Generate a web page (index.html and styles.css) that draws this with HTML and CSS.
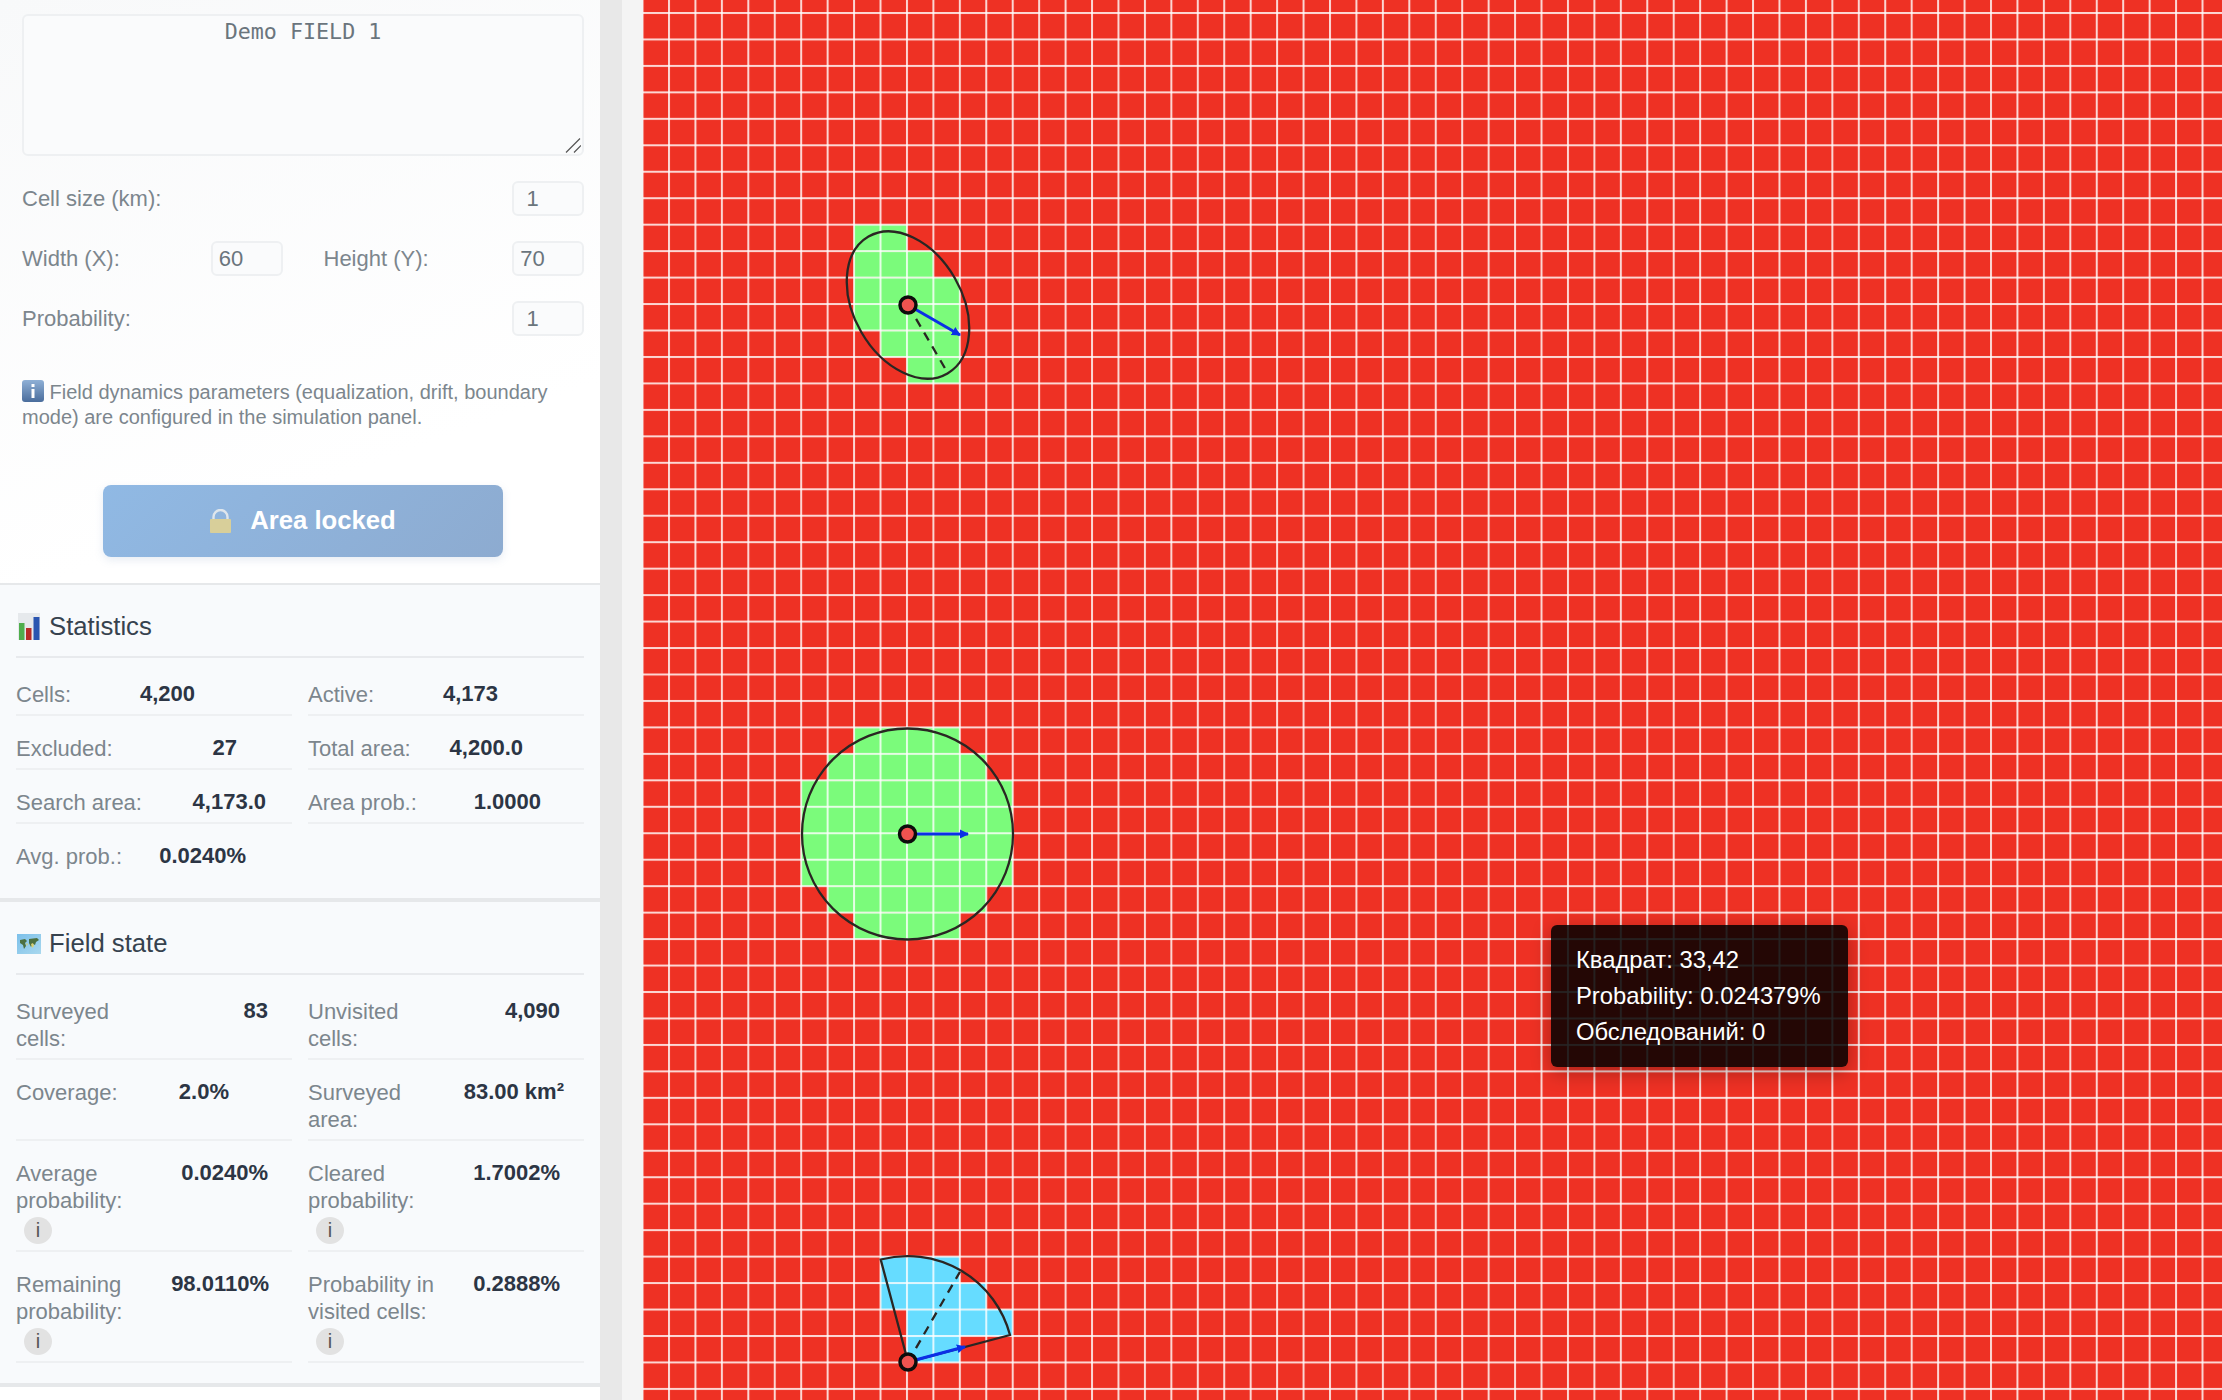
FILE: index.html
```html
<!DOCTYPE html>
<html lang="en">
<head>
    <meta charset="UTF-8">
    <meta name="viewport" content="width=device-width, initial-scale=1.0">
    <title>Search field</title>
    <link rel="stylesheet" href="styles.css">
</head>
<body>
    <aside class="sidebar">
        <section class="setup">
            <div class="name-wrap">
                <textarea class="field-name" readonly>Demo FIELD 1</textarea>
                <svg class="grip" viewBox="0 0 16 15">
                    <path d="M1 14.5L15 0.5M9 14.5L16 7.5" fill="none" stroke="#555" stroke-width="1.2"/>
                </svg>
            </div>

            <div class="form-row">
                <div class="form-item">
                    <label>Cell size (km):</label>
                    <input class="num" type="text" value="1" readonly>
                </div>
            </div>
            <div class="form-row">
                <div class="form-item">
                    <label>Width (X):</label>
                    <input class="num" type="text" value="60" readonly>
                </div>
                <div class="form-item">
                    <label>Height (Y):</label>
                    <input class="num" type="text" value="70" readonly>
                </div>
            </div>
            <div class="form-row">
                <div class="form-item">
                    <label>Probability:</label>
                    <input class="num" type="text" value="1" readonly>
                </div>
            </div>

            <p class="note">
                <svg class="note-icon" viewBox="0 0 22 22">
                    <defs>
                        <linearGradient id="infoBlue" x1="0" y1="0" x2="0" y2="1">
                            <stop offset="0" stop-color="#8fb0d6"/>
                            <stop offset="1" stop-color="#4a6d9c"/>
                        </linearGradient>
                    </defs>
                    <rect width="22" height="22" rx="3" fill="url(#infoBlue)"/>
                    <rect x="9.5" y="9" width="3" height="9" fill="#fff"/>
                    <rect x="9.5" y="4" width="3" height="3" fill="#fff"/>
                </svg>
                Field dynamics parameters (equalization, drift, boundary mode) are configured in the simulation panel.
            </p>

            <button class="lock-btn" type="button">
                <svg class="lock-icon" viewBox="0 0 21 24">
                    <path d="M3.5 11V8a7 7 0 0 1 14 0V11" fill="none" stroke="#dfe6ec" stroke-width="2.4"/>
                    <rect y="10" width="21" height="14" rx="1" fill="#d8cf9a"/>
                </svg>
                <span>Area locked</span>
            </button>
        </section>

        <section class="panel">
            <h3 class="panel-title">
                <svg class="title-icon" viewBox="0 0 22 27">
                    <rect width="22" height="27" fill="#e6e9ec"/>
                    <rect x="1" y="10" width="5.5" height="17" fill="#4fae4c"/>
                    <rect x="8" y="15" width="5.5" height="12" fill="#b92c26"/>
                    <rect x="15.5" y="4" width="6" height="23" fill="#2a55b0"/>
                </svg>
                Statistics
            </h3>
            <div class="stats">
                <div class="stat stat-cells"><span class="stat-label">Cells:</span><b class="stat-value">4,200</b></div>
                <div class="stat stat-active"><span class="stat-label">Active:</span><b class="stat-value">4,173</b></div>
                <div class="stat stat-excluded"><span class="stat-label">Excluded:</span><b class="stat-value">27</b></div>
                <div class="stat stat-total"><span class="stat-label">Total area:</span><b class="stat-value">4,200.0</b></div>
                <div class="stat stat-search"><span class="stat-label">Search area:</span><b class="stat-value">4,173.0</b></div>
                <div class="stat stat-prob"><span class="stat-label">Area prob.:</span><b class="stat-value">1.0000</b></div>
                <div class="stat stat-avg stat-last"><span class="stat-label">Avg. prob.:</span><b class="stat-value">0.0240%</b></div>
            </div>
        </section>

        <section class="panel">
            <h3 class="panel-title">
                <svg class="title-icon title-icon-map" viewBox="0 0 24 20">
                    <defs>
                        <linearGradient id="mapBlue" x1="0" y1="0" x2="1" y2="1">
                            <stop offset="0" stop-color="#7cc0ea"/>
                            <stop offset="1" stop-color="#a9d8ee"/>
                        </linearGradient>
                    </defs>
                    <rect width="24" height="20" fill="url(#mapBlue)"/>
                    <path d="M3 6l5-1 2 2-2 2 1 3-2 3-1-4-3-2zM12 5l8-1 2 2-3 2-1 3-2-1-2 3-2-4z" fill="#4d7040"/>
                    <path d="M9 9l2 1-1 2zM14 10l2-1 1 3-2 2z" fill="#d8cf72"/>
                </svg>
                Field state
            </h3>
            <div class="stats">
                <div class="stat"><span class="stat-label">Surveyed cells:</span><b class="stat-value">83</b></div>
                <div class="stat"><span class="stat-label">Unvisited cells:</span><b class="stat-value">4,090</b></div>
                <div class="stat stat-coverage"><span class="stat-label">Coverage:</span><b class="stat-value">2.0%</b></div>
                <div class="stat stat-surveyed"><span class="stat-label">Surveyed area:</span><b class="stat-value">83.00 km²</b></div>
                <div class="stat"><span class="stat-label">Average probability: <i class="hint">i</i></span><b class="stat-value">0.0240%</b></div>
                <div class="stat"><span class="stat-label">Cleared probability: <i class="hint">i</i></span><b class="stat-value">1.7002%</b></div>
                <div class="stat stat-remaining"><span class="stat-label">Remaining probability: <i class="hint">i</i></span><b class="stat-value">98.0110%</b></div>
                <div class="stat"><span class="stat-label">Probability in visited cells: <i class="hint">i</i></span><b class="stat-value">0.2888%</b></div>
            </div>
        </section>
    </aside>

    <div class="splitter"></div>
    <div class="spacer"></div>

    <main class="board">
        <svg class="board-svg" viewBox="643 0 1579 1400">
            <defs>
                <pattern id="gridCell" patternUnits="userSpaceOnUse" x="668" y="12" width="26.44" height="26.46">
                    <rect width="2" height="26.46" fill="#fff" fill-opacity="0.8"/>
                    <rect width="26.44" height="2" fill="#fff" fill-opacity="0.8"/>
                </pattern>
                <marker id="arrowHead" markerUnits="userSpaceOnUse" markerWidth="10" markerHeight="10" refX="8" refY="5" orient="auto">
                    <path d="M0 0.5L9 5L0 9.5z" fill="#0b2fe6"/>
                </marker>
            </defs>

            <!-- cells are in grid units -->
            <g transform="translate(669 13) scale(26.44 26.46)">
                <g fill="#7bfb7b">
                    <rect x="7" y="8" width="2" height="1"/>
                    <rect x="7" y="9" width="3" height="1"/>
                    <rect x="7" y="10" width="4" height="2"/>
                    <rect x="8" y="12" width="3" height="1"/>
                    <rect x="9" y="13" width="2" height="1"/>

                    <rect x="7" y="27" width="4" height="1"/>
                    <rect x="6" y="28" width="6" height="1"/>
                    <rect x="5" y="29" width="8" height="4"/>
                    <rect x="6" y="33" width="6" height="1"/>
                    <rect x="7" y="34" width="4" height="1"/>
                </g>
                <g fill="#66dcff">
                    <rect x="8" y="47" width="3" height="1"/>
                    <rect x="8" y="48" width="4" height="1"/>
                    <rect x="9" y="49" width="4" height="1"/>
                    <rect x="9" y="50" width="2" height="1"/>
                </g>
            </g>
            <rect x="643" width="1579" height="1400" fill="url(#gridCell)"/>

            <g class="zone">
                <ellipse cx="908" cy="305" rx="79" ry="54" transform="rotate(60 908 305)"/>
                <path class="heading" d="M908 305L946 370"/>
                <path class="dir" d="M908 305L960 335"/>
                <circle class="pin" cx="908" cy="305" r="8"/>
            </g>
            <g class="zone">
                <circle cx="907.5" cy="834" r="105.5"/>
                <path class="dir" d="M907.5 834H968"/>
                <circle class="pin" cx="907.5" cy="834" r="8"/>
            </g>
            <g class="zone">
                <path d="M908 1362L880.7 1259.5A106 106 0 0 1 1010 1335z"/>
                <path class="heading" d="M908 1362L960 1271.7"/>
                <path class="dir" d="M908 1362L965 1346.7"/>
                <circle class="pin" cx="908" cy="1362" r="8"/>
            </g>
        </svg>

        <div class="tooltip">
            Квадрат: 33,42<br>
            Probability: 0.024379%<br>
            Обследований: 0
        </div>
    </main>
</body>
</html>
```

FILE: styles.css
```css
* {
    margin: 0;
    padding: 0;
    box-sizing: border-box;
}

body {
    display: flex;
    height: 100vh;
    overflow: hidden;
    background-color: #fff;
    font-family: 'Liberation Sans', Arial, sans-serif;
}

.sidebar {
    width: 600px;
    flex-shrink: 0;
    height: 100%;
    overflow: hidden;
    background-color: #fff;
}

.splitter {
    width: 22px;
    flex-shrink: 0;
    background-color: #e8e8e8;
}

.spacer {
    width: 21px;
    flex-shrink: 0;
    background-color: #f4f4f4;
}

.setup {
    padding: 14px 16px 26px 22px;
    background: linear-gradient(160deg, #f8f9fa, #fff 75%);
    border-bottom: 2px solid #e6e8ea;
}

.name-wrap {
    position: relative;
    margin-bottom: 25px;
}

.field-name {
    display: block;
    width: 100%;
    height: 142px;
    padding: 3px 10px;
    border: 2px solid #eef0f2;
    border-radius: 6px;
    outline: none;
    resize: none;
    background-color: #fafbfc;
    color: #6a757d;
    font-family: 'DejaVu Sans Mono', monospace;
    font-size: 21.7px;
    text-align: center;
}

.grip {
    position: absolute;
    right: 3px;
    bottom: 3px;
    width: 16px;
    height: 15px;
}

.form-row {
    display: flex;
    gap: 41px;
    margin-bottom: 25px;
}

.form-item {
    flex: 1;
    display: flex;
    justify-content: space-between;
    align-items: center;
    height: 35px;
}

.form-item label {
    font-size: 22px;
    color: #7c868d;
}

.num {
    width: 72px;
    height: 35px;
    padding: 0 37px 0 6px;
    border: 2px solid #eef0f2;
    border-radius: 6px;
    outline: none;
    background-color: #fafbfc;
    color: #6a757d;
    font-family: inherit;
    font-size: 22px;
    text-align: center;
}

.note {
    margin-top: 44px;
    font-size: 20px;
    line-height: 25.4px;
    color: #7c868d;
}

.note-icon {
    width: 22px;
    height: 22px;
    vertical-align: -3px;
}

.lock-btn {
    display: flex;
    align-items: center;
    justify-content: center;
    gap: 19px;
    width: 400px;
    height: 72px;
    margin: 54px 0 0 81px;
    border: none;
    border-radius: 8px;
    background: linear-gradient(135deg, #90b9e4, #8dabd0);
    box-shadow: 0 3px 8px rgba(120, 150, 190, 0.18);
    color: #fff;
    font-family: inherit;
    font-size: 25.7px;
    font-weight: bold;
}

.lock-icon {
    width: 21px;
    height: 24px;
}

.panel {
    padding: 27px 16px 20px;
    background-color: #f8fafc;
    border-bottom: 4px solid #e6e8ea;
}

.panel-title {
    display: flex;
    align-items: center;
    gap: 9px;
    box-sizing: content-box;
    height: 30px;
    padding-bottom: 14px;
    margin-bottom: 23.5px;
    border-bottom: 2px solid #e8eaed;
    font-size: 25.7px;
    font-weight: normal;
    color: #36424e;
}

.title-icon {
    width: 22px;
    height: 27px;
    margin-left: 2px;
}

.title-icon-map {
    width: 24px;
    height: 20px;
    margin-left: 1px;
    margin-right: -1px;
}

.stats {
    display: grid;
    grid-template-columns: 276px 276px;
    column-gap: 16px;
    row-gap: 18.8px;
}

.stat {
    display: flex;
    align-items: flex-start;
    padding-bottom: 6px;
    border-bottom: 2px solid #eef0f2;
    font-size: 22px;
    line-height: 27px;
}

.stat-label {
    max-width: 130px;
    color: #7c868d;
}

.stat-value {
    margin-left: auto;
    margin-right: 24px;
    margin-top: -1px;
    color: #2c3544;
    white-space: nowrap;
}

.stat-last {
    border-bottom-color: transparent;
}

.stat-cells .stat-value { margin-right: 97px; }
.stat-active .stat-value { margin-right: 86px; }
.stat-excluded .stat-value { margin-right: 55px; }
.stat-total .stat-value { margin-right: 61px; }
.stat-search .stat-value { margin-right: 26px; }
.stat-prob .stat-value { margin-right: 43px; }
.stat-avg .stat-value { margin-right: 46px; }
.stat-coverage .stat-value { margin-right: 63px; }
.stat-surveyed .stat-value { margin-right: 20px; }
.stat-remaining .stat-value { margin-right: 23px; }

.hint {
    display: inline-flex;
    align-items: center;
    justify-content: center;
    width: 28px;
    height: 27px;
    margin: 3px 0 0 8px;
    border-radius: 50%;
    background-color: #e2e2e2;
    color: #555;
    font-size: 20px;
    font-style: normal;
    vertical-align: top;
}

.board {
    position: relative;
    flex: 1;
    height: 100%;
    overflow: hidden;
    background-color: #ee3124;
}

.board-svg {
    display: block;
    width: 100%;
    height: 100%;
}

.zone > ellipse,
.zone > circle,
.zone > path {
    fill: none;
    stroke: #2a2623;
    stroke-width: 2.3;
}

.zone .heading {
    stroke-dasharray: 9 7;
}

.zone .dir {
    stroke: #0b2fe6;
    stroke-width: 3;
    marker-end: url(#arrowHead);
}

.zone .pin {
    fill: #ef5350;
    stroke: #0c0c0c;
    stroke-width: 3.5;
}

.tooltip {
    position: absolute;
    left: 908px;
    top: 925px;
    width: 297px;
    height: 142px;
    padding: 17px 25px;
    border-radius: 6px;
    background-color: rgba(0, 0, 0, 0.85);
    box-shadow: 0 5px 20px rgba(0, 0, 0, 0.3);
    color: #fff;
    font-size: 23.8px;
    line-height: 36px;
    white-space: nowrap;
}
```
